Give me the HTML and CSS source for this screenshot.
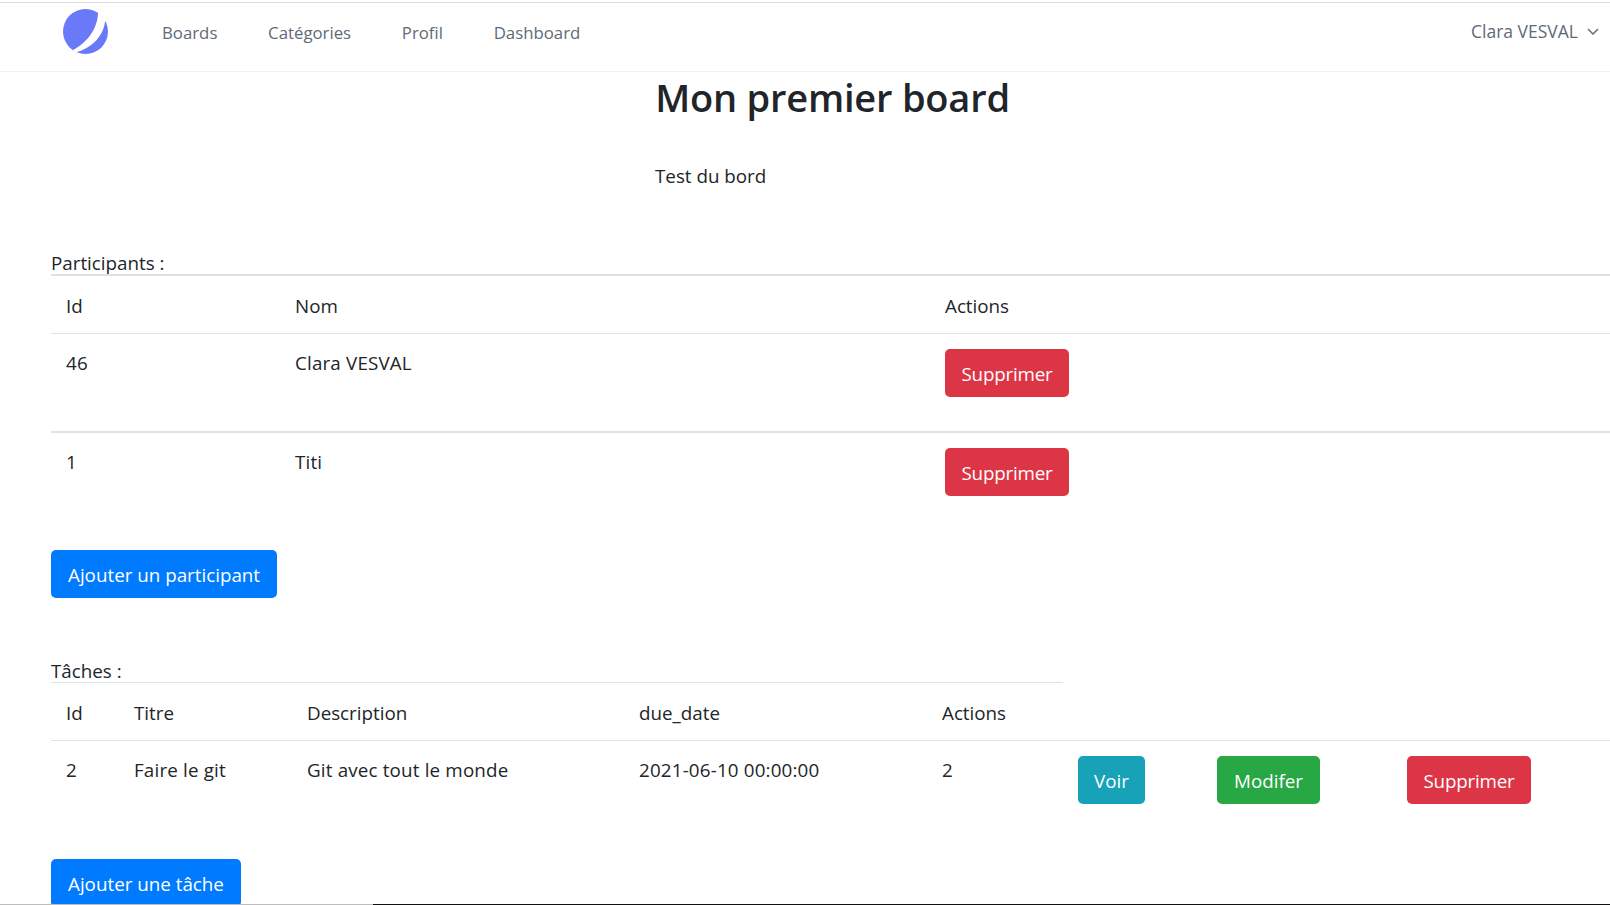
FILE: index.html
```html
<!DOCTYPE html>
<html lang="fr">
<head>
<meta charset="utf-8">
<title>Mon premier board</title>
<link rel="stylesheet" href="styles.css">
</head>
<body>
<nav class="navbar">
  <svg class="logo" viewBox="0 0 45 45" width="45" height="45" aria-hidden="true">
    <circle cx="22.5" cy="22.5" r="22.5" fill="#6979f8"/>
    <path d="M35 3C35 19 25 33 10 41L12 45L14 43C28 39 40 28 42 13L46 6L38 0Z" fill="#fff"/>
  </svg>
  <ul class="nav-links">
    <li><a href="#">Boards</a></li>
    <li><a href="#">Catégories</a></li>
    <li><a href="#">Profil</a></li>
    <li><a href="#">Dashboard</a></li>
  </ul>
  <div class="user">
    <span>Clara VESVAL</span>
    <svg class="chevron" viewBox="0 0 12 7" width="12" height="7" aria-hidden="true">
      <path d="M1 1L6 6L11 1" fill="none" stroke="#6b7280" stroke-width="1.6"/>
    </svg>
  </div>
</nav>
<main class="page">
  <h1 class="title">Mon premier board</h1>
  <p class="subtitle">Test du bord</p>

  <section class="participants">
    <div class="label">Participants :</div>
    <table class="table table-p">
      <colgroup><col class="p1"><col class="p2"><col class="p3"></colgroup>
      <thead><tr><th>Id</th><th>Nom</th><th>Actions</th></tr></thead>
      <tbody>
        <tr><td>46</td><td>Clara VESVAL</td><td><a class="btn danger" href="#">Supprimer</a></td></tr>
        <tr><td>1</td><td>Titi</td><td><a class="btn danger" href="#">Supprimer</a></td></tr>
      </tbody>
    </table>
    <a class="btn primary" href="#">Ajouter un participant</a>
  </section>

  <section class="tasks">
    <div class="label">Tâches :</div>
    <table class="table table-t">
      <colgroup><col class="t1"><col class="t2"><col class="t3"><col class="t4"><col class="t5"><col class="t6"><col class="t7"><col class="t8"></colgroup>
      <thead><tr><th>Id</th><th>Titre</th><th>Description</th><th>due_date</th><th>Actions</th></tr></thead>
      <tbody>
        <tr><td>2</td><td>Faire le git</td><td>Git avec tout le monde</td><td>2021-06-10 00:00:00</td><td>2</td>
          <td><a class="btn info" href="#">Voir</a></td>
          <td><a class="btn success" href="#">Modifer</a></td>
          <td><a class="btn danger" href="#">Supprimer</a></td></tr>
      </tbody>
    </table>
    <a class="btn primary" href="#">Ajouter une tâche</a>
  </section>
</main>
<div class="screen-edge"><span class="edge-gray"></span><span class="edge-black"></span></div>
</body>
</html>
```
FILE: styles.css
```css
* { box-sizing: border-box; }
html, body { margin: 0; height: 905px; overflow: hidden; background: #fff; }
body {
  padding-top: 2px;
  position: relative;
  font-family: "Open Sans", "Liberation Sans", sans-serif;
  font-size: 18.8px;
  line-height: 29px;
  color: #212529;
}
.navbar {
  display: flex;
  align-items: center;
  height: 70px;
  border-top: 1px solid #dcdcdc;
  border-bottom: 1px solid #f2f2f2;
  padding: 0 11px 0 63px;
}
.logo { flex: none; align-self: flex-start; margin-top: 6px; }
.nav-links {
  display: flex;
  gap: 50.7px;
  list-style: none;
  margin: 0 0 9px 54px;
  padding: 0;
  font-size: 16.8px;
}
.nav-links a { color: #606a76; text-decoration: none; }
.user {
  display: flex;
  align-items: center;
  gap: 9px;
  margin: 0 0 11px auto;
  font-size: 17.5px;
  color: #606a76;
}
.page { padding-left: 51px; width: 1610px; }
.title {
  margin: 0 0 0 4px;
  height: 60px;
  font-size: 38px;
  line-height: 50px;
  font-weight: 600;
  letter-spacing: -0.2px;
  text-align: center;
}
.subtitle { margin: 30px 0 0 604px; height: 29px; }
.participants { margin-top: 60px; }
.label { height: 23px; line-height: 25px; }
.table { border-collapse: collapse; table-layout: fixed; width: 1559px; }
.p1 { width: 229px; }
.p2 { width: 650px; }
.t1 { width: 68px; }
.t2 { width: 173px; }
.t3 { width: 332px; }
.t4 { width: 303px; }
.t5 { width: 136px; }
.t6 { width: 139px; }
.t7 { width: 190px; }
.t8 { width: 218px; }
th, td { padding: 0 15px; text-align: left; vertical-align: top; font-weight: 400; }
th { padding-top: 16px; padding-bottom: 12px; border-bottom: 1px solid #dee2e6; }
.table-p th { border-top: 2px solid #dee2e6; }
.table-t th { border-top: 1px solid #dee2e6; }
td { padding-top: 15px; letter-spacing: 0.17px; }
.table-p tr + tr td { border-top: 2px solid #dee2e6; }
.table-p td { height: 98px; }
.table-t td { height: 80px; border-top: 1px solid #dee2e6; }
.btn {
  display: inline-block;
  height: 48px;
  line-height: 51px;
  padding: 0 17px;
  border-radius: 5px;
  color: #fff;
  text-decoration: none;
  white-space: nowrap;
  letter-spacing: 0;
}
td .btn { display: block; width: fit-content; }
.primary { background: #007bff; }
.danger { background: #dc3545; padding: 0 16.5px; letter-spacing: -0.2px; }
.success { background: #28a745; }
.info { background: #17a2b8; padding: 0 16px; }
.participants > .btn { margin-top: 20px; }
.tasks { margin-top: 61px; }
.tasks > .btn { margin-top: 39px; }
.screen-edge { position: absolute; left: 0; right: 0; bottom: 0; height: 1px; display: flex; }
.edge-gray { width: 373px; background: #bdbdbd; }
.edge-black { flex: 1; background: #111; }
```
